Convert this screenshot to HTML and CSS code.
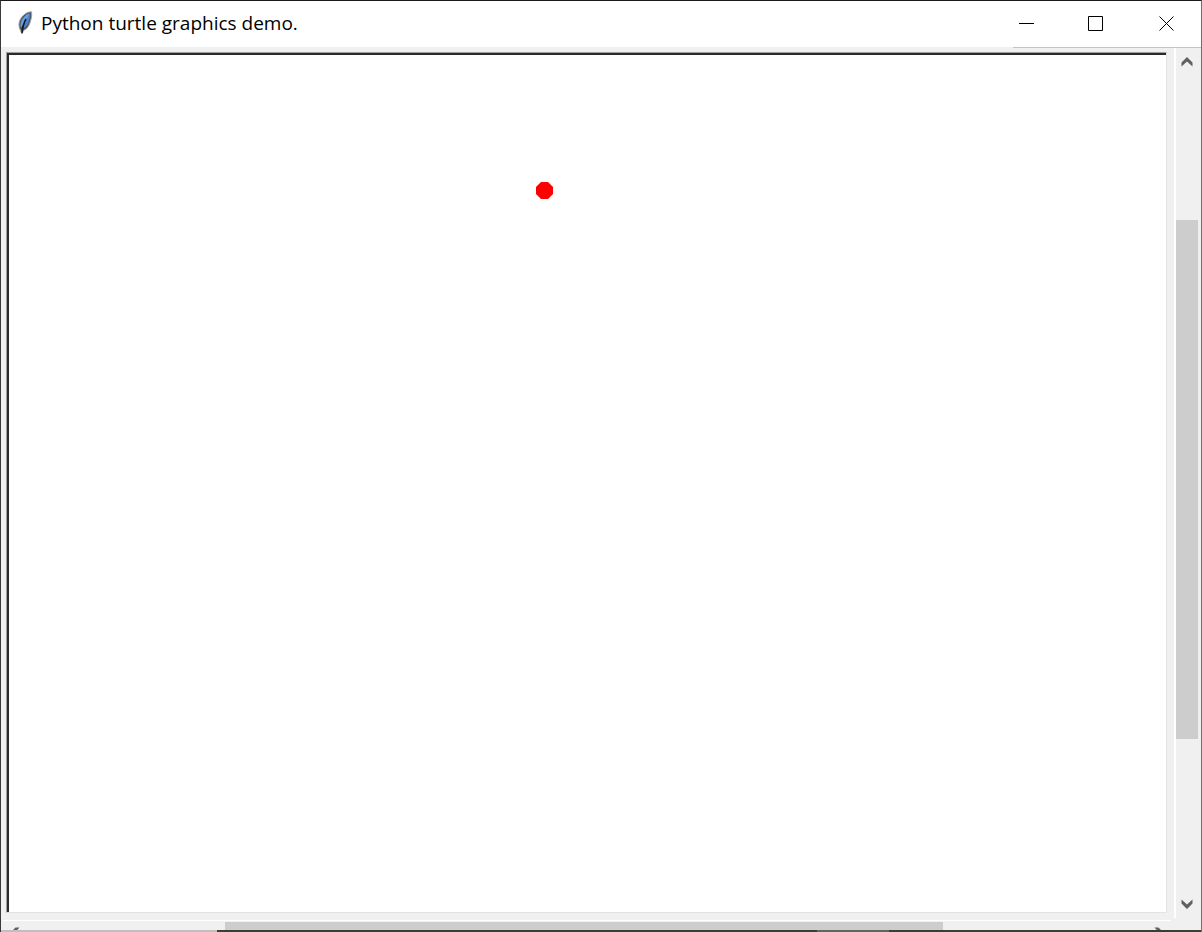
FILE: index.html
```html
<!DOCTYPE html>
<html lang="en">
<head>
    <meta charset="UTF-8">
    <meta name="viewport" content="width=device-width, initial-scale=1.0">
    <title>Python turtle graphics demo.</title>
    <link rel="stylesheet" href="styles.css">
</head>
<body>
    <div class="window">
        <header class="titlebar">
            <svg class="feather" width="16" height="24" viewBox="0 0 16 24">
                <path d="M14.500 .8C10 .8 5.500 4 3 9C1.500 12 1.500 16 3.500 19.500L5 23L6.500 19.500C10.500 18 12.500 14 13.500 10C14.500 7 15 4 14.500 .8Z" fill="#4b5158" stroke="#a3a3a3" stroke-width="1"/>
                <path d="M13 2.200C9 3 6.500 6 4.500 9.500C3.200 12.500 3.200 15 4 16.500L9 10Z" fill="#65a0e4"/>
                <path d="M13.400 2.500C13 7 11.800 12 9.500 15L6.500 17.500L8 10Z" fill="#4a86d0"/>
                <path d="M9 8Q6 13 5 22" fill="none" stroke="#15191f" stroke-width="1.500"/>
            </svg>
            <h1>Python turtle graphics demo.</h1>
            <div class="controls">
                <button type="button" aria-label="Minimize">
                    <svg width="16" height="16" viewBox="0 0 16 16"><path d="M1 8.500H16"/></svg>
                </button>
                <button type="button" aria-label="Maximize">
                    <svg width="16" height="16" viewBox="0 0 16 16"><path d="M.5 1.500H14.500V15.500H.5Z"/></svg>
                </button>
                <button type="button" aria-label="Close">
                    <svg width="16" height="16" viewBox="0 0 16 16"><path d="M1.500 1.500L15.500 15.500M15.500 1.500L1.500 15.500"/></svg>
                </button>
            </div>
        </header>

        <main class="content">
            <div class="canvas">
                <svg class="turtle" width="17" height="17" viewBox="0 0 17 17">
                    <path d="M5 0H12L17 5V12L12 17H5L0 12V5Z" fill="#f00"/>
                </svg>
            </div>
            <div class="scrollbar vertical">
                <button type="button" aria-label="Scroll up">
                    <svg width="12" height="12" viewBox="0 0 12 12"><path d="M.5 6.500L6 1L11.500 6.500V10.500L6 5.500L.5 10.500Z"/></svg>
                </button>
                <div class="track">
                    <div class="before"></div>
                    <div class="thumb"></div>
                    <div class="after"></div>
                </div>
                <button type="button" aria-label="Scroll down">
                    <svg width="12" height="12" viewBox="0 0 12 12"><path d="M.5 1.500L6 6.500L11.500 1.500V5.500L6 11L.5 5.500Z"/></svg>
                </button>
            </div>
            <div class="scrollbar horizontal">
                <button type="button" aria-label="Scroll left">
                    <svg width="12" height="12" viewBox="0 0 12 12"><path d="M4.500 .5H8.500L3.500 6L8.500 11.500H4.500L-1 6Z"/></svg>
                </button>
                <div class="track">
                    <div class="before"></div>
                    <div class="thumb"></div>
                    <div class="after"></div>
                </div>
                <button type="button" aria-label="Scroll right">
                    <svg width="12" height="12" viewBox="0 0 12 12"><path d="M3.500 .5H7.500L13 6L7.500 11.500H3.500L8.500 6Z"/></svg>
                </button>
            </div>
        </main>
        <div class="bottom-edge"></div>
    </div>
</body>
</html>
```
FILE: styles.css
```css
* {
    box-sizing: border-box;
}

body {
    margin: 0;
    font-family: "Open Sans", "Noto Sans", sans-serif;
}

.window {
    display: flex;
    flex-direction: column;
    height: 100vh;
    overflow: hidden;
    background-color: #f0f0f0;
    border-top: 1px solid #1d191c;
    border-left: 1px solid #3a3a3a;
    border-right: 1px solid #707070;
}

.titlebar {
    display: flex;
    flex: none;
    align-items: center;
    height: 46px;
    padding-left: 16px;
    padding-bottom: 2px;
    background-color: #fff;
}

.feather {
    margin-right: 8px;
}

h1 {
    flex: 1;
    margin: 0;
    font-size: 19px;
    font-weight: normal;
    line-height: 24px;
    color: #000;
}

button {
    display: flex;
    align-items: center;
    justify-content: center;
    padding: 0;
    border: 0;
    background: none;
}

.controls {
    display: flex;
}

.controls button {
    width: 70px;
    height: 44px;
}

.controls path {
    fill: none;
    stroke: #000;
    stroke-width: 1;
}

.content {
    display: grid;
    flex: 1;
    grid-template-columns: 1fr 27px;
    grid-template-rows: 1fr 10px;
    min-height: 0;
    overflow: hidden;
    background: linear-gradient(#c4c4c4, #c4c4c4) no-repeat right top / 188px 1px;
}

.canvas {
    position: relative;
    margin: 5px 7px 7px 5px;
    background-color: #fff;
    border: 1px solid #e3e3e3;
    border-top-color: #a0a0a0;
    border-left-color: #a0a0a0;
    box-shadow: inset 2px 2px 0 #2b2b2b;
}

.turtle {
    position: absolute;
    left: 529px;
    top: 129px;
}

.scrollbar {
    display: flex;
}

.scrollbar button {
    flex: none;
    width: 28px;
    height: 28px;
}

.scrollbar path {
    fill: #606060;
}

.track {
    display: flex;
    flex: 1;
}

.thumb {
    background-color: #cdcdcd;
}

.vertical {
    flex-direction: column;
    margin: 1px 3px 2px 0;
    border-left: 2px solid #fff;
}

.vertical button {
    width: 22px;
}

.vertical .track {
    flex-direction: column;
}

.vertical .before {
    flex: 144;
}

.vertical .thumb {
    flex: 519;
}

.vertical .after {
    flex: 151;
}

/* only the top of this bar shows above the window edge */
.horizontal {
    height: 24px;
    margin: 0 3px 0 2px;
    border-top: 1px solid #fff;
}

.horizontal .before {
    flex: 194;
}

.horizontal .thumb {
    flex: 718;
    margin-top: 1px;
}

.horizontal .after {
    flex: 200;
}

.horizontal button {
    height: 24px;
}

.bottom-edge {
    flex: none;
    height: 2px;
    background: linear-gradient(to right, #bfbfbf 18%, #3a4030 18%, #3a4030 68%, #626858 68%, #626858 74%, #3a4030 74%);
}
```
